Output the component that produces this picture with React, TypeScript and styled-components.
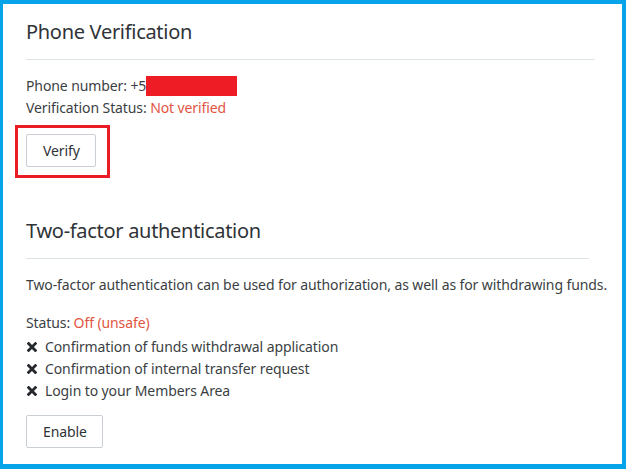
import styled, { createGlobalStyle } from "styled-components";

const GlobalStyle = createGlobalStyle`
  html, body {
    margin: 0;
    padding: 0;
    background: #ffffff;
  }
  * {
    box-sizing: border-box;
  }
`;

const Frame = styled.div`
  width: 626px;
  height: 469px;
  border-style: solid;
  border-color: #08a4e9;
  border-width: 4px 4px 5px 3px;
  background: #ffffff;
  padding: 16px 0 0 23px;
  font-family: "Noto Sans", "Open Sans", sans-serif;
  font-size: 14px;
  line-height: 22px;
  letter-spacing: -0.1px;
  color: #3b3f44;
  overflow: hidden;
`;

const Section = styled.section<{ $width: number; $gap: number }>`
  width: ${(p) => p.$width}px;
  margin-bottom: ${(p) => p.$gap}px;
`;

const Heading = styled.h2`
  margin: 0;
  font-size: 20px;
  line-height: 24px;
  font-weight: 400;
  letter-spacing: -0.3px;
  color: #2f3338;
`;

const Rule = styled.hr`
  border: 0;
  height: 1px;
  background: #dde4e4;
  margin: 15px 0 15px;
`;

const Line = styled.div`
  white-space: nowrap;
`;

const Paragraph = styled.p`
  margin: 0 0 16px;
  white-space: nowrap;
`;

const Danger = styled.span`
  color: #e2553f;
`;

const Redacted = styled.span`
  display: inline-block;
  width: 91px;
  height: 20px;
  background: #ee1c25;
  vertical-align: -5px;
`;

const Highlight = styled.div`
  width: max-content;
  margin: 6px 0 0 -11px;
  padding: 6px 11px 8px 8px;
  border: 3px solid #ea1c26;
`;

const Button = styled.button<{ $top?: number }>`
  display: flex;
  align-items: center;
  justify-content: center;
  height: 33px;
  margin-top: ${(p) => p.$top ?? 0}px;
  padding: 0 15px 0 16px;
  background: #ffffff;
  border: 1px solid #c9cfd4;
  border-radius: 2px;
  font-family: inherit;
  font-size: 14px;
  letter-spacing: -0.1px;
  color: #2f3338;
`;

const List = styled.ul`
  list-style: none;
  margin: 2px 0 0;
  padding: 0;
`;

const Item = styled.li`
  display: flex;
  align-items: center;
  gap: 8px;
  padding-left: 1px;
  white-space: nowrap;
`;

const Cross = () => (
  <svg width="10" height="10" viewBox="0 0 10 10">
    <path
      d="M1.6 1.6 L8.4 8.4 M8.4 1.6 L1.6 8.4"
      stroke="#25282c"
      strokeWidth="2.8"
      strokeLinecap="square"
    />
  </svg>
);

const items = [
  "Confirmation of funds withdrawal application",
  "Confirmation of internal transfer request",
  "Login to your Members Area",
];

export default function App() {
  return (
    <>
      <GlobalStyle />
      <Frame>
        <Section $width={569} $gap={41}>
          <Heading>Phone Verification</Heading>
          <Rule />
          <Line>
            Phone number: +5
            <Redacted />
          </Line>
          <Line>
            Verification Status: <Danger>Not verified</Danger>
          </Line>
          <Highlight>
            <Button>Verify</Button>
          </Highlight>
        </Section>
        <Section $width={563} $gap={0}>
          <Heading>Two-factor authentication</Heading>
          <Rule />
          <Paragraph>
            Two-factor authentication can be used for authorization, as well as
            for withdrawing funds.
          </Paragraph>
          <Line>
            Status: <Danger>Off (unsafe)</Danger>
          </Line>
          <List>
            {items.map((t) => (
              <Item key={t}>
                <Cross />
                {t}
              </Item>
            ))}
          </List>
          <Button $top={13}>Enable</Button>
        </Section>
      </Frame>
    </>
  );
}
